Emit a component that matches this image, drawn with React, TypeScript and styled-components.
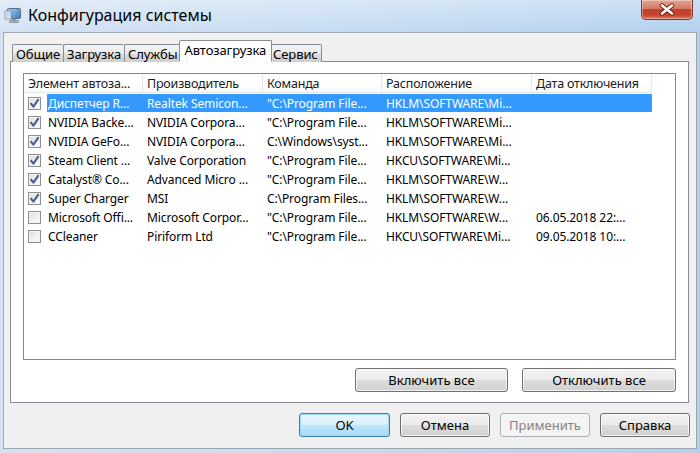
import styled, { createGlobalStyle } from 'styled-components';

type Entry = {
	name: string;
	vendor: string;
	command: string;
	location: string;
	date: string;
	checked: boolean;
};

const entries: Entry[] = [
	{ name: 'Диспетчер R...', vendor: 'Realtek Semicon...', command: '"C:\\Program File...', location: 'HKLM\\SOFTWARE\\Mi...', date: '', checked: true },
	{ name: 'NVIDIA Backe...', vendor: 'NVIDIA Corpora...', command: '"C:\\Program File...', location: 'HKLM\\SOFTWARE\\Mi...', date: '', checked: true },
	{ name: 'NVIDIA GeFo...', vendor: 'NVIDIA Corpora...', command: 'C:\\Windows\\syst...', location: 'HKLM\\SOFTWARE\\Mi...', date: '', checked: true },
	{ name: 'Steam Client ...', vendor: 'Valve Corporation', command: '"C:\\Program File...', location: 'HKCU\\SOFTWARE\\Mi...', date: '', checked: true },
	{ name: 'Catalyst® Co...', vendor: 'Advanced Micro ...', command: '"C:\\Program File...', location: 'HKLM\\SOFTWARE\\W...', date: '', checked: true },
	{ name: 'Super Charger', vendor: 'MSI', command: 'C:\\Program Files...', location: 'HKLM\\SOFTWARE\\W...', date: '', checked: true },
	{ name: 'Microsoft Offi...', vendor: 'Microsoft Corpor...', command: '"C:\\Program File...', location: 'HKLM\\SOFTWARE\\W...', date: '06.05.2018 22:...', checked: false },
	{ name: 'CCleaner', vendor: 'Piriform Ltd', command: '"C:\\Program File...', location: 'HKCU\\SOFTWARE\\Mi...', date: '09.05.2018 10:...', checked: false },
];

const columns = ['Элемент автоза...', 'Производитель', 'Команда', 'Расположение', 'Дата отключения'];
const tabs = ['Общие', 'Загрузка', 'Службы', 'Автозагрузка', 'Сервис'];

const AppIcon = () => (
	<svg width="18" height="18" viewBox="0 0 18 18">
		<defs>
			<linearGradient id="scr" x1="0" y1="0" x2="1" y2="1">
				<stop offset="0" stopColor="#9fd2f7" />
				<stop offset="1" stopColor="#2f78c8" />
			</linearGradient>
		</defs>
		<rect x="3.5" y="2.5" width="13" height="10" rx="1" fill="url(#scr)" stroke="#5b6f86" />
		<rect x="8" y="12.5" width="4" height="2" fill="#8a96a3" />
		<rect x="5.5" y="14.5" width="9" height="2" rx="0.5" fill="#aab4be" stroke="#6d7884" strokeWidth="0.6" />
		<rect x="1" y="5" width="6" height="8" fill="#f4f6f8" stroke="#7b8794" strokeWidth="0.8" />
		<path d="M2.3 7h3.4M2.3 9h3.4M2.3 11h2.4" stroke="#7d9cc0" strokeWidth="0.8" />
	</svg>
);

const CloseGlyph = () => (
	<svg width="18" height="13" viewBox="0 0 18 13">
		<path d="M4 2.5l10 8M14 2.5l-10 8" stroke="#6a1c14" strokeWidth="4.4" strokeLinecap="round" />
		<path d="M4 2.5l10 8M14 2.5l-10 8" stroke="#ffffff" strokeWidth="2.6" strokeLinecap="round" />
	</svg>
);

const CheckBox = ({ checked }: { checked: boolean }) => (
	<Box>
		{checked && (
			<svg width="11" height="11" viewBox="0 0 11 11">
				<path d="M1.6 5.2l2.8 3.4L9.6 1.2" fill="none" stroke="#4a5d8f" strokeWidth="2.1" strokeLinejoin="round" />
			</svg>
		)}
	</Box>
);

const App = () => {
	return (
		<>
			<GlobalStyle />
			<Window>
				<TitleBar>
					<AppIcon />
					<Title>Конфигурация системы</Title>
					<CloseButton>
						<CloseGlyph />
					</CloseButton>
				</TitleBar>
				<Client>
					<TabStrip>
						{tabs.map(t => (
							<Tab key={t} $active={t === 'Автозагрузка'}>
								{t}
							</Tab>
						))}
					</TabStrip>
					<Panel>
						<ListView>
							<HeaderRow>
								{columns.map(c => (
									<HeaderCell key={c}>{c}</HeaderCell>
								))}
							</HeaderRow>
							{entries.map((e, i) => (
								<Row key={e.name}>
									<NameCell>
										<CheckBox checked={e.checked} />
										<Cell $selected={i === 0} $first>
											{e.name}
										</Cell>
									</NameCell>
									<Cell $selected={i === 0}>{e.vendor}</Cell>
									<Cell $selected={i === 0}>{e.command}</Cell>
									<Cell $selected={i === 0}>{e.location}</Cell>
									<Cell $selected={i === 0}>{e.date}</Cell>
								</Row>
							))}
						</ListView>
						<PanelButtons>
							<Button $width={153}>Включить все</Button>
							<Button $width={154}>Отключить все</Button>
						</PanelButtons>
					</Panel>
					<DialogButtons>
						<Button $width={91} $focused>
							OK
						</Button>
						<Button $width={90}>Отмена</Button>
						<Button $width={90} disabled>
							Применить
						</Button>
						<Button $width={90}>Справка</Button>
					</DialogButtons>
				</Client>
			</Window>
		</>
	);
};

const GlobalStyle = createGlobalStyle`
	body {
		margin: 0;
		font-family: 'Noto Sans', 'Open Sans', sans-serif;
		font-size: 12.5px;
		color: #000;
	}
`;

const Window = styled.div`
	width: 700px;
	height: 453px;
	display: flex;
	flex-direction: column;
	background: linear-gradient(90deg, #d3e3f4 0%, #c6dcf2 45%, #b2d0ee 100%);
	overflow: hidden;
`;

const TitleBar = styled.div`
	height: 32px;
	flex-shrink: 0;
	display: flex;
	align-items: center;
	gap: 6px;
	padding: 0 7px 2px 4px;
	box-sizing: border-box;
	background: linear-gradient(180deg, rgba(255, 255, 255, 0.35), rgba(255, 255, 255, 0));
`;

const Title = styled.div`
	font-size: 16px;
	color: #000;
	flex: 1;
	white-space: nowrap;
`;

const CloseButton = styled.div`
	align-self: flex-start;
	width: 52px;
	height: 20px;
	box-sizing: border-box;
	display: flex;
	align-items: center;
	justify-content: center;
	border: 1px solid #7d3a33;
	border-top: none;
	border-radius: 0 0 5px 5px;
	background: linear-gradient(180deg, #e3a493 0%, #d57a66 45%, #c2412c 50%, #c9452f 80%, #dd7b5f 100%);
	box-shadow: inset 0 0 0 1px rgba(255, 255, 255, 0.35);
`;

const Client = styled.div`
	flex: 1;
	margin: 0 3px 4px 3px;
	border: 1px solid #a0a6ad;
	background: #f0f0f0;
	padding: 8px 7px 0 6px;
	display: flex;
	flex-direction: column;
`;

const TabStrip = styled.div`
	display: flex;
	align-items: flex-end;
	height: 21px;
	padding-left: 2px;
	position: relative;
	z-index: 1;
`;

const Tab = styled.div<{ $active?: boolean }>`
	height: ${({ $active }) => ($active ? 22 : 18)}px;
	box-sizing: border-box;
	padding: 0 ${({ $active }) => ($active ? 5 : 3)}px;
	margin: 0 ${({ $active }) => ($active ? -2 : 0)}px;
	display: flex;
	align-items: center;
	white-space: nowrap;
	font-size: 13px;
	letter-spacing: -0.1px;
	border: 1px solid #898c95;
	border-right: ${({ $active }) => ($active ? '1px solid #898c95' : 'none')};
	border-bottom: ${({ $active }) => ($active ? '1px solid #ffffff' : 'none')};
	border-radius: 2px 2px 0 0;
	background: ${({ $active }) =>
		$active ? '#ffffff' : 'linear-gradient(180deg, #f3f3f3 0%, #ebebeb 50%, #dddddd 51%, #cfcfcf 100%)'};
	position: relative;
	z-index: ${({ $active }) => ($active ? 2 : 1)};
	padding-bottom: ${({ $active }) => ($active ? 2 : 0)}px;

	&:nth-child(4) + & {
		border-left: none;
	}
	&:last-child {
		border-right: 1px solid #898c95;
	}
`;

const Panel = styled.div`
	margin-top: -1px;
	background: #ffffff;
	border: 1px solid #898c95;
	padding: 11px 12px 10px 12px;
	display: flex;
	flex-direction: column;
`;

const ListView = styled.div`
	height: 287px;
	box-sizing: border-box;
	border: 1px solid #828790;
	background: #ffffff;
	overflow: hidden;
	letter-spacing: -0.2px;
`;

const HeaderRow = styled.div`
	display: grid;
	grid-template-columns: 119px 120px 119px 150px 120px;
	height: 19px;
	width: 628px;
	border-bottom: 1px solid #e5e5e5;
	box-sizing: border-box;
	background: linear-gradient(180deg, #ffffff 0%, #ffffff 60%, #f7f8f9 100%);
`;

const HeaderCell = styled.div`
	padding-left: 4px;
	border-right: 1px solid #e3e8ee;
	display: flex;
	align-items: center;
	white-space: nowrap;
	overflow: hidden;
	color: #1b1b1b;
`;

const Row = styled.div`
	display: grid;
	grid-template-columns: 119px 120px 119px 150px 120px;
	height: 19px;
	box-sizing: border-box;
	width: 628px;
	padding-top: 1px;
	font-size: 12px;
	letter-spacing: -0.1px;
`;

const NameCell = styled.div`
	display: flex;
	align-items: center;
	padding-left: 4px;
	min-width: 0;
`;

const Cell = styled.div<{ $selected?: boolean; $first?: boolean }>`
	display: flex;
	align-items: center;
	height: 18px;
	align-self: center;
	padding-left: ${({ $first }) => ($first ? 1 : 4)}px;
	margin-left: ${({ $first }) => ($first ? 6 : 0)}px;
	flex: 1;
	min-width: 0;
	white-space: nowrap;
	overflow: hidden;
	background: ${({ $selected }) => ($selected ? '#3399ff' : 'transparent')};
	color: ${({ $selected }) => ($selected ? '#ffffff' : '#000000')};
`;

const Box = styled.div`
	width: 13px;
	height: 13px;
	box-sizing: border-box;
	flex-shrink: 0;
	border: 1px solid #8e8f8f;
	background: linear-gradient(135deg, #dcdcdc 0%, #f2f2f2 60%, #ffffff 100%);
	box-shadow: inset 0 0 0 1px #f4f4f4;
	display: flex;
	align-items: center;
	justify-content: center;
`;

const PanelButtons = styled.div`
	display: flex;
	justify-content: flex-end;
	gap: 14px;
	margin-top: 8px;
`;

const DialogButtons = styled.div`
	display: flex;
	justify-content: flex-end;
	gap: 10px;
	margin: 10px -1px 0 0;
`;

const Button = styled.button<{ $width: number; $focused?: boolean }>`
	width: ${({ $width }) => $width}px;
	height: 24px;
	font: inherit;
	font-size: 13px;
	color: #000;
	border-radius: 3px;
	border: 1px solid ${({ $focused }) => ($focused ? '#3c7fb1' : '#707070')};
	background: ${({ $focused }) =>
		$focused
			? 'linear-gradient(180deg, #eaf6fd 0%, #d9f0fc 50%, #bee6fd 51%, #a7d9f5 100%)'
			: 'linear-gradient(180deg, #f2f2f2 0%, #ebebeb 50%, #dddddd 51%, #cfcfcf 100%)'};
	box-shadow: inset 0 0 0 1px ${({ $focused }) => ($focused ? '#9fdcfb' : 'rgba(255, 255, 255, 0.7)')};
	padding: 0;

	&:disabled {
		border-color: #adb2b5;
		background: #f4f4f4;
		color: #838383;
		box-shadow: none;
	}
`;

export default App;
